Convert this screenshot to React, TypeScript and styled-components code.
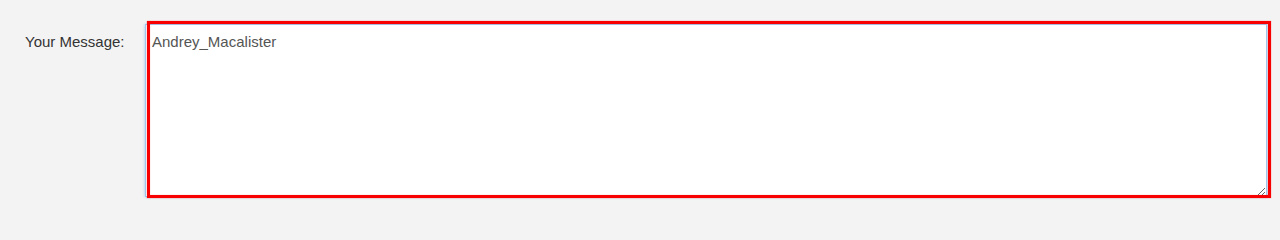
import { useState } from "react";
import styled, { createGlobalStyle } from "styled-components";

const GlobalStyle = createGlobalStyle`
  html, body {
    margin: 0;
    padding: 0;
    background: #f3f3f3;
    font-family: "Liberation Sans", Arial, sans-serif;
  }
`;

const Page = styled.div`
  height: 206px;
  box-sizing: border-box;
  padding-top: 24px;
  background: #f3f3f3;
`;

const FormRow = styled.div`
  display: grid;
  grid-template-columns: 145px 1122px;
  align-items: start;
`;

const Label = styled.label`
  box-sizing: border-box;
  padding: 7px 0 0 25px;
  font-size: 15px;
  line-height: 21px;
  color: #333;
`;

const FieldWrap = styled.div`
  position: relative;
  height: 173px;
`;

const MessageArea = styled.textarea`
  display: block;
  box-sizing: border-box;
  width: 1122px;
  height: 173px;
  margin: 0;
  padding: 6px 6px;
  border: 1px solid #9fc6ec;
  border-radius: 0;
  background: #fff;
  font-family: "Liberation Sans", Arial, sans-serif;
  font-size: 15px;
  line-height: 21px;
  color: #555;
  outline: none;
  box-shadow: 0 0 3px rgba(102, 175, 233, 0.6);
`;

// red annotation frame drawn over the field
const Highlight = styled.span`
  position: absolute;
  left: 2px;
  top: -3px;
  width: 1124px;
  height: 177px;
  box-sizing: border-box;
  border: 3px solid #f80000;
  box-shadow: 0 0 1px rgba(255, 0, 0, 0.6), inset 0 0 1px rgba(255, 0, 0, 0.6);
  pointer-events: none;
`;

const App = () => {
  const [message, setMessage] = useState("Andrey_Macalister");
  return (
    <Page>
      <GlobalStyle />
      <FormRow>
        <Label htmlFor="message">Your Message:</Label>
        <FieldWrap>
          <MessageArea
            id="message"
            value={message}
            onChange={(e) => setMessage(e.target.value)}
          />
          <Highlight />
        </FieldWrap>
      </FormRow>
    </Page>
  );
};

export default App;
